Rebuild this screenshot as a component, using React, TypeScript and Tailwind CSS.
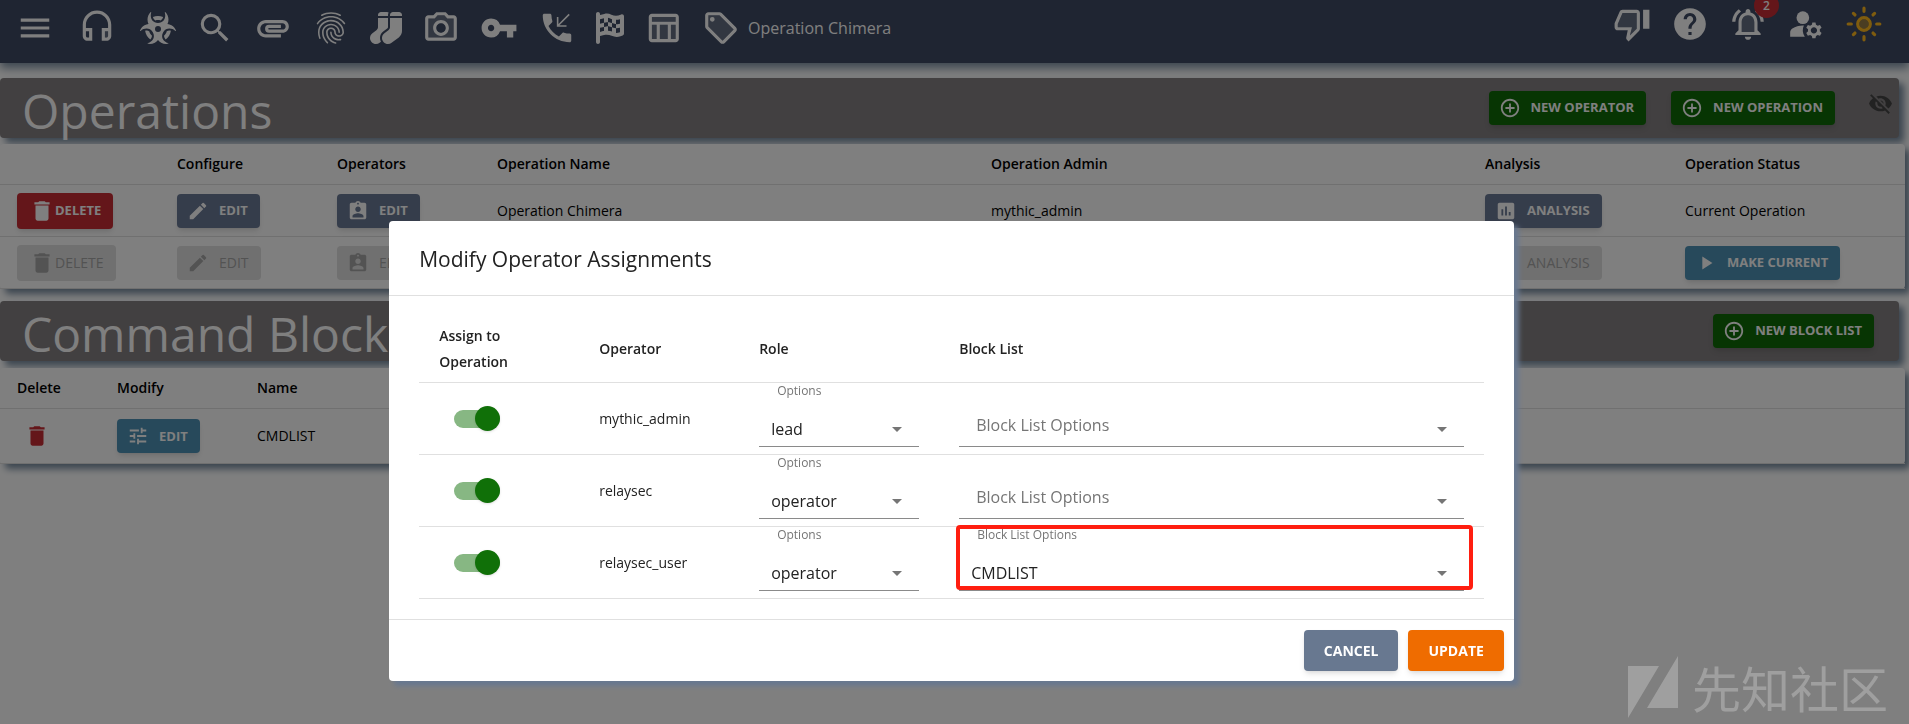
import type { ReactNode } from "react";
import {
  MdMenu, MdSearch, MdAttachment, MdFingerprint, MdVpnKey, MdHelp, MdManageAccounts,
  MdAddCircleOutline, MdVisibilityOff, MdDelete, MdEdit, MdAssignmentInd, MdAssessment,
  MdPlayArrow, MdTune,
} from "react-icons/md";
import { FaBiohazard, FaSocks, FaFlagCheckered } from "react-icons/fa6";

function TwoTone({ tint, line }: { tint: string; line: string }) {
  return (
    <svg viewBox="0 0 24 24" fill="currentColor" className="size-[38px]" aria-hidden="true">
      <path d={tint} opacity=".2" />
      <path d={line} />
    </svg>
  );
}

const Headset = () => (
  <TwoTone
    tint="M17 14h2v4h-2z"
    line="M12 1c-4.97 0-9 4.03-9 9v7c0 1.66 1.34 3 3 3h3v-8H5v-2c0-3.87 3.13-7 7-7s7 3.13 7 7v2h-4v8h3c1.66 0 3-1.34 3-3v-7c0-4.97-4.03-9-9-9zM7 14v4H6c-.55 0-1-.45-1-1v-3h2zm12 3c0 .55-.45 1-1 1h-1v-4h2v3z"
  />
);
const Camera = () => (
  <TwoTone
    tint="M20 6h-4.05l-1.83-2H9.88L8.05 6H4v12h16V6zm-8 11c-2.76 0-5-2.24-5-5s2.24-5 5-5 5 2.24 5 5-2.24 5-5 5z"
    line="M4 20h16c1.1 0 2-.9 2-2V6c0-1.1-.9-2-2-2h-3.17L15 2H9L7.17 4H4c-1.1 0-2 .9-2 2v12c0 1.1.9 2 2 2zM4 6h4.05l1.83-2h4.24l1.83 2H20v12H4V6zm8 1c-2.76 0-5 2.24-5 5s2.24 5 5 5 5-2.24 5-5-2.24-5-5-5zm0 8c-1.65 0-3-1.35-3-3s1.35-3 3-3 3 1.35 3 3-1.35 3-3 3z"
  />
);
const Callback = () => (
  <svg viewBox="0 0 24 24" fill="currentColor" className="size-[38px]" aria-hidden="true">
    <path d="M20 15.5c-1.25 0-2.45-.2-3.57-.57-.1-.03-.21-.05-.31-.05-.26 0-.51.1-.71.29l-2.2 2.2c-2.83-1.44-5.15-3.75-6.59-6.59l2.2-2.21c.28-.26.36-.65.25-1C8.7 6.45 8.5 5.25 8.5 4c0-.55-.45-1-1-1H4c-.55 0-1 .45-1 1 0 9.39 7.61 17 17 17 .55 0 1-.45 1-1v-3.5c0-.55-.45-1-1-1z" />
    <path d="M19.7 3.4l-7 7M12.4 5v5.7h5.6" fill="none" stroke="currentColor" strokeWidth="1" />
  </svg>
);
const Chart = () => (
  <TwoTone
    tint="M5 10h3v9H5zm5 0h5v9h-5zM5 5h15v3H5zm12 5h3v9h-3z"
    line="M20 3H5c-1.1 0-2 .9-2 2v14c0 1.1.9 2 2 2h15c1.1 0 2-.9 2-2V5c0-1.1-.9-2-2-2zM8 19H5v-9h3v9zm7 0h-5v-9h5v9zm5 0h-3v-9h3v9zm0-11H5V5h15v3z"
  />
);
const Tag = () => (
  <TwoTone
    tint="M11 4H4v7l9 9.01L20 13 11 4z"
    line="M21.41 11.58l-9-9C12.05 2.22 11.55 2 11 2H4c-1.1 0-2 .9-2 2v7c0 .55.22 1.05.59 1.42l9 9c.36.36.86.58 1.41.58s1.05-.22 1.41-.59l7-7c.37-.36.59-.86.59-1.41s-.23-1.06-.59-1.42zM13 20.01L4 11V4h7l9 9-7 7.01zM6.5 5a1.5 1.5 0 1 0 0 3 1.5 1.5 0 0 0 0-3z"
  />
);
const ThumbDown = () => (
  <TwoTone
    tint="M3 12v2h9l-1.34 5.34L15 15V5H6z"
    line="M15 3H6c-.83 0-1.54.5-1.84 1.22l-3.02 7.05c-.09.23-.14.47-.14.73v2c0 1.1.9 2 2 2h6.31l-.95 4.57-.03.32c0 .41.17.79.44 1.06L9.83 23l6.58-6.59c.37-.36.59-.86.59-1.41V5c0-1.1-.9-2-2-2zm0 12-4.34 4.34L12 14H3v-2l3-7h9v10zm4-12h4v12h-4z"
  />
);
const Bell = () => (
  <TwoTone
    tint="M12 6.5c-2.49 0-4 2.02-4 4.5v6h8v-6c0-2.48-1.51-4.5-4-4.5z"
    line="M12 22c1.1 0 2-.9 2-2h-4c0 1.1.9 2 2 2zm6-6v-5c0-3.07-1.63-5.64-4.5-6.32V4c0-.83-.67-1.5-1.5-1.5s-1.5.67-1.5 1.5v.68C7.64 5.36 6 7.92 6 11v5l-2 2v1h16v-1l-2-2zm-2 1H8v-6c0-2.48 1.51-4.5 4-4.5s4 2.02 4 4.5v6zM7.58 4.08L6.15 2.65C3.75 4.48 2.17 7.3 2.03 10.5h2c.15-2.65 1.51-4.97 3.55-6.42zm12.39 6.42h2c-.15-3.2-1.73-6.02-4.12-7.85l-1.42 1.43c2.02 1.45 3.39 3.77 3.54 6.42z"
  />
);
const Sun = () => (
  <svg viewBox="0 0 24 24" className="size-[38px] text-[#ffb81c]" stroke="currentColor" strokeWidth="2" strokeLinecap="round" fill="none" aria-hidden="true">
    <circle cx="12" cy="12" r="3" fill="currentColor" stroke="none" opacity=".45" />
    <circle cx="12" cy="12" r="4" />
    <path d="M12 2v2M12 20v2M2 12h2M20 12h2M5.3 5.3l1 1M17.7 17.7l1 1M5.3 18.7l1-1M17.7 6.3l1-1" />
  </svg>
);

function NavButton({ label, children }: { label: string; children: ReactNode }) {
  return (
    <button type="button" aria-label={label} className="relative flex shrink-0 items-center justify-center">
      {children}
    </button>
  );
}

const tones = {
  green: "bg-[#0e6a06] text-white shadow-md text-[13px] font-bold",
  slate: "bg-[#6b7a96] text-white shadow-md text-[13px] font-bold",
  red: "bg-[#c92d34] text-white shadow-md text-[13px] font-bold",
  blue: "bg-[#4e92b6] text-white shadow-md text-[13px] font-bold",
  off: "bg-[#e0e0e0] text-[#a6a6a6] text-sm",
};

function ActionButton({ tone, icon, children, tight = false }: { tone: keyof typeof tones; icon: ReactNode; children: ReactNode; tight?: boolean }) {
  return (
    <button
      type="button"
      disabled={tone === "off"}
      className={`inline-flex items-center rounded pr-3 align-middle whitespace-nowrap ${tight ? "h-9 pl-3" : "h-[34px] gap-[10px] pl-[10px]"} ${tones[tone]}`}
    >
      {icon}
      {children}
    </button>
  );
}

const panelShadow = "shadow-[5px_5px_7px_#788ca0]";
const buttonIcon = "size-[22px]";

function SectionBar({ title, children }: { title: string; children: ReactNode }) {
  return (
    <div className={`mr-[10px] flex h-[60px] items-center justify-between rounded bg-[#848082] pl-[22px] ${panelShadow}`}>
      <h1 className="pt-[6px] text-5xl leading-[60px] text-white">{title}</h1>
      <div className="flex items-center">{children}</div>
    </div>
  );
}

const th = "h-[41px] border-b border-[#e0e0e0] px-[17px] text-left font-semibold";
const td = "h-[52px] border-b border-[#e0e0e0] px-[17px]";

function OperationsTable() {
  return (
    <div className={`mt-[6px] mr-1 rounded bg-white ${panelShadow}`}>
      <table className="w-full table-fixed border-separate border-spacing-0 text-sm">
        <colgroup>
          <col className="w-40" />
          <col className="w-40" />
          <col className="w-40" />
          <col />
          <col />
          <col className="w-[200px]" />
          <col className="w-[237px]" />
        </colgroup>
        <thead>
          <tr>
            <th className={th}></th>
            <th className={th}>Configure</th>
            <th className={th}>Operators</th>
            <th className={th}>Operation Name</th>
            <th className={th}>Operation Admin</th>
            <th className={th}>Analysis</th>
            <th className={th}>Operation Status</th>
          </tr>
        </thead>
        <tbody>
          <tr>
            <td className={td}><ActionButton tone="red" tight icon={<MdDelete className="size-[26px]" />}>DELETE</ActionButton></td>
            <td className={td}><ActionButton tone="slate" icon={<MdEdit className={buttonIcon} />}>EDIT</ActionButton></td>
            <td className={td}><ActionButton tone="slate" icon={<MdAssignmentInd className={buttonIcon} />}>EDIT</ActionButton></td>
            <td className={td}>Operation Chimera</td>
            <td className={td}>mythic_admin</td>
            <td className={td}><ActionButton tone="slate" icon={<MdAssessment className={buttonIcon} />}>ANALYSIS</ActionButton></td>
            <td className={td}>Current Operation</td>
          </tr>
          <tr>
            <td className={td}><ActionButton tone="off" tight icon={<MdDelete className="size-[26px]" />}>DELETE</ActionButton></td>
            <td className={td}><ActionButton tone="off" icon={<MdEdit className={buttonIcon} />}>EDIT</ActionButton></td>
            <td className={td}><ActionButton tone="off" icon={<MdAssignmentInd className={buttonIcon} />}>EDIT</ActionButton></td>
            <td className={td}></td>
            <td className={td}></td>
            <td className={td}><ActionButton tone="off" icon={<MdAssessment className={buttonIcon} />}>ANALYSIS</ActionButton></td>
            <td className={td}><ActionButton tone="blue" icon={<MdPlayArrow className={buttonIcon} />}>MAKE CURRENT</ActionButton></td>
          </tr>
        </tbody>
      </table>
    </div>
  );
}

function BlockListTable() {
  return (
    <div className={`mt-[7px] mr-1 rounded bg-white ${panelShadow}`}>
      <table className="w-full table-fixed border-separate border-spacing-0 text-sm">
        <colgroup>
          <col className="w-[100px]" />
          <col className="w-[140px]" />
          <col />
        </colgroup>
        <thead>
          <tr>
            <th className={th}>Delete</th>
            <th className={th}>Modify</th>
            <th className={th}>Name</th>
          </tr>
        </thead>
        <tbody>
          <tr>
            <td className="h-[55px] border-b border-[#e0e0e0] px-6">
              <button type="button" aria-label="Delete CMDLIST" className="flex text-[#c92d34]"><MdDelete className="size-[26px]" /></button>
            </td>
            <td className="h-[55px] border-b border-[#e0e0e0] px-[17px]"><ActionButton tone="blue" icon={<MdTune className={buttonIcon} />}>EDIT</ActionButton></td>
            <td className="h-[55px] border-b border-[#e0e0e0] px-[17px]">CMDLIST</td>
          </tr>
        </tbody>
      </table>
    </div>
  );
}

function Field({ id, label, value, options, marked = false }: { id: string; label: string; value: string; options: string[]; marked?: boolean }) {
  return (
    <div className="relative flex flex-col pb-[7px]">
      <label
        htmlFor={id}
        className={value ? "h-4 pl-[18px] text-xs leading-4 text-[#757575]" : "pointer-events-none absolute top-7 left-[17px] text-base leading-7 text-[#757575]"}
      >
        {label}
      </label>
      {value ? null : <div className="h-4" />}
      <select id={id} defaultValue={value} className="h-12 w-full appearance-none border-b border-[#8a8a8a] bg-transparent pt-3 pl-3 text-base text-[#222]">
        {options.map((o) => <option key={o} value={o}>{o}</option>)}
      </select>
      <svg viewBox="0 0 10 5" className="pointer-events-none absolute right-[17px] bottom-[22px] h-[5px] w-[10px]" aria-hidden="true">
        <path d="M0 0h10L5 5z" fill="#757575" />
      </svg>
      {marked && <div className="pointer-events-none absolute -top-[2px] -right-[9px] -left-[3px] h-[65px] rounded border-4 border-[#ff1e10]" />}
    </div>
  );
}

const operators = [
  { name: "mythic_admin", role: "lead", block: "" },
  { name: "relaysec", role: "operator", block: "" },
  { name: "relaysec_user", role: "operator", block: "CMDLIST" },
];

function AssignmentDialog() {
  const head = "h-[67px] border-b border-[#e0e0e0] px-5 text-left leading-[26px] font-semibold";
  const cell = "border-b border-[#e0e0e0] px-5";
  return (
    <div className="fixed inset-0 flex items-start justify-center bg-black/50 pt-[221px] pr-[6px]">
      <div role="dialog" aria-labelledby="dialog-title" className="w-[59.1%] rounded bg-white text-[#222] shadow-[5px_5px_5px_#687890]">
        <h2 id="dialog-title" className="border-b border-[#e0e0e0] px-[30px] pt-[22px] pb-[20px] text-[21px] leading-8 font-medium">
          Modify Operator Assignments
        </h2>
        <div className="border-b border-[#e0e0e0] px-[30px] py-5">
          <table className="w-full table-fixed border-separate border-spacing-0 text-sm">
            <colgroup>
              <col className="w-40" />
              <col className="w-40" />
              <col className="w-[200px]" />
              <col />
            </colgroup>
            <thead>
              <tr>
                <th className={head}>Assign to Operation</th>
                <th className={head}>Operator</th>
                <th className={head}>Role</th>
                <th className={head}>Block List</th>
              </tr>
            </thead>
            <tbody>
              {operators.map((o) => (
                <tr key={o.name}>
                  <td className={cell}>
                    <label className="ml-[15px] flex w-[46px] items-center">
                      <input type="checkbox" defaultChecked aria-label={`Assign ${o.name}`} className="peer sr-only" />
                      <span className="flex h-[18px] w-full items-center justify-end rounded-full bg-[#87b783]">
                        <span className="size-[25px] rounded-full bg-[#107008] shadow" />
                      </span>
                    </label>
                  </td>
                  <td className={cell}>{o.name}</td>
                  <td className={cell}>
                    <Field id={`role-${o.name}`} label="Options" value={o.role} options={["lead", "operator", "spectator"]} />
                  </td>
                  <td className={cell}>
                    <Field id={`block-${o.name}`} label="Block List Options" value={o.block} options={["", "CMDLIST"]} marked={o.block !== ""} />
                  </td>
                </tr>
              ))}
            </tbody>
          </table>
        </div>
        <div className="flex justify-end gap-[10px] p-[10px]">
          <button type="button" className="h-[41px] rounded bg-[#687890] px-5 text-sm font-bold text-white shadow-md">CANCEL</button>
          <button type="button" className="h-[41px] rounded bg-[#ef6c00] px-5 text-sm font-bold text-white shadow-md">UPDATE</button>
        </div>
      </div>
    </div>
  );
}

function Watermark() {
  return (
    <div className="pointer-events-none fixed right-[21px] bottom-[2px] flex items-center gap-[14px] text-white opacity-25">
      <svg viewBox="0 0 50 62" className="h-[62px] w-[50px]" fill="currentColor" aria-hidden="true">
        <path d="M0 10h31L0 62zM50 0v52H19z" />
      </svg>
      <span className="font-['Noto_Sans_CJK_SC',sans-serif] text-[49px] leading-[70px]">先知社区</span>
    </div>
  );
}

export default function App() {
  return (
    <div className="min-h-screen bg-white font-['Open_Sans','Noto_Sans',sans-serif] text-black">
      <header className="flex h-[63px] items-start justify-between bg-[#3e4a64] pr-[26px] pl-4 text-white shadow-[0_5px_9px_#788ca0]">
        <nav className="flex h-[55px] items-center gap-5">
          <NavButton label="Menu"><MdMenu className="mr-1 size-[38px]" /></NavButton>
          <NavButton label="Callbacks"><span className="mr-1"><Headset /></span></NavButton>
          <NavButton label="Payloads"><FaBiohazard className="h-8 w-9" /></NavButton>
          <NavButton label="Search"><MdSearch className="size-[38px]" /></NavButton>
          <NavButton label="Files"><MdAttachment className="size-[38px]" /></NavButton>
          <NavButton label="Artifacts"><MdFingerprint className="size-[38px]" /></NavButton>
          <NavButton label="Proxies"><FaSocks className="size-8" /></NavButton>
          <NavButton label="Screenshots"><Camera /></NavButton>
          <NavButton label="Credentials"><MdVpnKey className="size-[38px]" /></NavButton>
          <NavButton label="Active callbacks"><Callback /></NavButton>
          <NavButton label="Events"><FaFlagCheckered className="h-8 w-7" /></NavButton>
          <NavButton label="Reporting"><Chart /></NavButton>
          <NavButton label="Tags"><Tag /></NavButton>
          <a href="#operation" className="-ml-3 text-base">Operation Chimera</a>
        </nav>
        <div className="flex h-12 items-center gap-5">
          <NavButton label="Feedback"><ThumbDown /></NavButton>
          <NavButton label="Help"><MdHelp className="size-[38px]" /></NavButton>
          <NavButton label="Notifications">
            <Bell />
            <span className="absolute -top-[12px] -right-[12px] flex size-[25px] items-center justify-center rounded-full bg-[#c92d34] text-xs font-semibold">2</span>
          </NavButton>
          <NavButton label="Account"><MdManageAccounts className="size-[38px]" /></NavButton>
          <NavButton label="Theme"><Sun /></NavButton>
        </div>
      </header>

      <main className="pt-[15px]">
        <SectionBar title="Operations">
          <div className="flex items-center gap-[25px] pr-[33px]">
            <ActionButton tone="green" icon={<MdAddCircleOutline className={buttonIcon} />}>NEW OPERATOR</ActionButton>
            <ActionButton tone="green" icon={<MdAddCircleOutline className={buttonIcon} />}>NEW OPERATION</ActionButton>
          </div>
          <button type="button" aria-label="Hide deleted operations" className="flex pr-[6px] pb-[10px] text-[#444]"><MdVisibilityOff className="size-[25px]" /></button>
        </SectionBar>
        <OperationsTable />
        <div className="mt-3">
          <SectionBar title="Command Block Lists">
            <div className="flex pr-[25px]">
              <ActionButton tone="green" icon={<MdAddCircleOutline className={buttonIcon} />}>NEW BLOCK LIST</ActionButton>
            </div>
          </SectionBar>
        </div>
        <BlockListTable />
      </main>

      <AssignmentDialog />
      <Watermark />
    </div>
  );
}
